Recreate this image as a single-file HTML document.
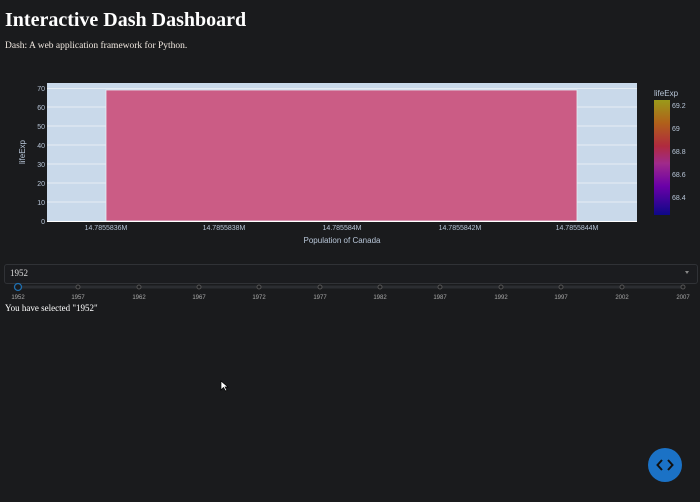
<!DOCTYPE html>
<html><head><style>
body{margin:0;width:700px;height:502px;background:#1a1b1d;overflow:hidden;font-family:"Liberation Serif",serif;color:#fff;position:relative}
.abs{position:absolute}
svg text{font-family:"Liberation Sans",sans-serif}
</style></head><body>
<div class="abs" style="left:5px;top:9px;font-size:20px;font-weight:bold">Interactive Dash Dashboard</div>
<div class="abs" style="left:5px;top:41px;font-size:9.5px;color:#f0e8e0">Dash: A web application framework for Python.</div>
<svg class="abs" style="left:0;top:0" width="700" height="260">
<rect x="47" y="83" width="590" height="138" fill="#c9d9ea"/>
<g stroke="#e6edf4" stroke-width="1">
<line x1="47" x2="637" y1="202" y2="202"/><line x1="47" x2="637" y1="183" y2="183"/><line x1="47" x2="637" y1="164" y2="164"/><line x1="47" x2="637" y1="145" y2="145"/><line x1="47" x2="637" y1="126" y2="126"/><line x1="47" x2="637" y1="107" y2="107"/><line x1="47" x2="637" y1="88.5" y2="88.5"/></g>
<rect x="106" y="90" width="471" height="131" fill="#cb5c85" stroke="#e6edf4" stroke-width="0.8"/>
<line x1="47" x2="637" y1="221.5" y2="221.5" stroke="#fff"/>
<g font-size="7" fill="#b8c6d8" text-anchor="end">
<text x="45" y="224">0</text><text x="45" y="205">10</text><text x="45" y="186">20</text><text x="45" y="167">30</text><text x="45" y="148">40</text><text x="45" y="129">50</text><text x="45" y="110">60</text><text x="45" y="91">70</text></g>
<g font-size="7" fill="#b8c6d8" text-anchor="middle">
<text x="106" y="230">14.7855836M</text><text x="224" y="230">14.7855838M</text><text x="342" y="230">14.785584M</text><text x="460" y="230">14.7855842M</text><text x="577" y="230">14.7855844M</text></g>
<text x="342" y="243" font-size="8" fill="#b8c6d8" text-anchor="middle">Population of Canada</text>
<text x="25" y="152" font-size="8" fill="#b8c6d8" text-anchor="middle" transform="rotate(-90 25 152)">lifeExp</text>
<defs><linearGradient id="g" x1="0" y1="1" x2="0" y2="0">
<stop offset="0" stop-color="#0d0887"/><stop offset="0.25" stop-color="#6a00a8"/><stop offset="0.45" stop-color="#a02a8a"/><stop offset="0.6" stop-color="#b02a3e"/><stop offset="0.8" stop-color="#b0601a"/><stop offset="1" stop-color="#9a9a1a"/></linearGradient></defs>
<rect x="654" y="100" width="16" height="115" fill="url(#g)"/>
<text x="654" y="96" font-size="8" fill="#b8c6d8">lifeExp</text>
<g font-size="7" fill="#b8c6d8"><text x="672" y="108">69.2</text><text x="672" y="131">69</text><text x="672" y="154">68.8</text><text x="672" y="177">68.6</text><text x="672" y="200">68.4</text></g>
</svg>
<div class="abs" style="left:4px;top:264px;width:692px;height:18px;border:1px solid #303236;border-radius:3px;background:#1b1c1f"></div>
<div class="abs" style="left:10px;top:268px;font-size:9px;color:#ddd">1952</div>
<div class="abs" style="left:685px;top:271px;width:0;height:0;border-left:2.5px solid transparent;border-right:2.5px solid transparent;border-top:3px solid #888"></div>
<svg class="abs" style="left:0;top:282px" width="700" height="24">
<line x1="18" x2="683" y1="5" y2="5" stroke="#2b2d31" stroke-width="3"/>
<g fill="#1a1b1d" stroke="#555" stroke-width="1">
<circle cx="78" cy="5" r="2"/><circle cx="139" cy="5" r="2"/><circle cx="199" cy="5" r="2"/><circle cx="259" cy="5" r="2"/><circle cx="320" cy="5" r="2"/><circle cx="380" cy="5" r="2"/><circle cx="440" cy="5" r="2"/><circle cx="501" cy="5" r="2"/><circle cx="561" cy="5" r="2"/><circle cx="622" cy="5" r="2"/><circle cx="683" cy="5" r="2"/></g>
<circle cx="18" cy="5" r="3.5" fill="#1a1b1d" stroke="#1f6fb0" stroke-width="1.3"/>
<g font-size="6" fill="#aaa" text-anchor="middle" style="font-family:'Liberation Serif',serif">
<text x="18" y="17">1952</text><text x="78" y="17">1957</text><text x="139" y="17">1962</text><text x="199" y="17">1967</text><text x="259" y="17">1972</text><text x="320" y="17">1977</text><text x="380" y="17">1982</text><text x="440" y="17">1987</text><text x="501" y="17">1992</text><text x="561" y="17">1997</text><text x="622" y="17">2002</text><text x="683" y="17">2007</text></g>
</svg>
<div class="abs" style="left:5px;top:303px;font-size:9px">You have selected "1952"</div>
<svg class="abs" style="left:220px;top:380px" width="10" height="12"><path d="M1 1 L1 10 L3.5 7.5 L5.5 11 L7 10.3 L5 7 L8 7 Z" fill="#fff" stroke="#000" stroke-width="0.7"/></svg>
<svg class="abs" style="left:648px;top:448px" width="34" height="34"><circle cx="17" cy="17" r="17" fill="#1b72c6"/>
<path d="M14 12 L9.5 17 L14 22 M20 12 L24.5 17 L20 22" fill="none" stroke="#111" stroke-width="2"/></svg>
</body></html>
